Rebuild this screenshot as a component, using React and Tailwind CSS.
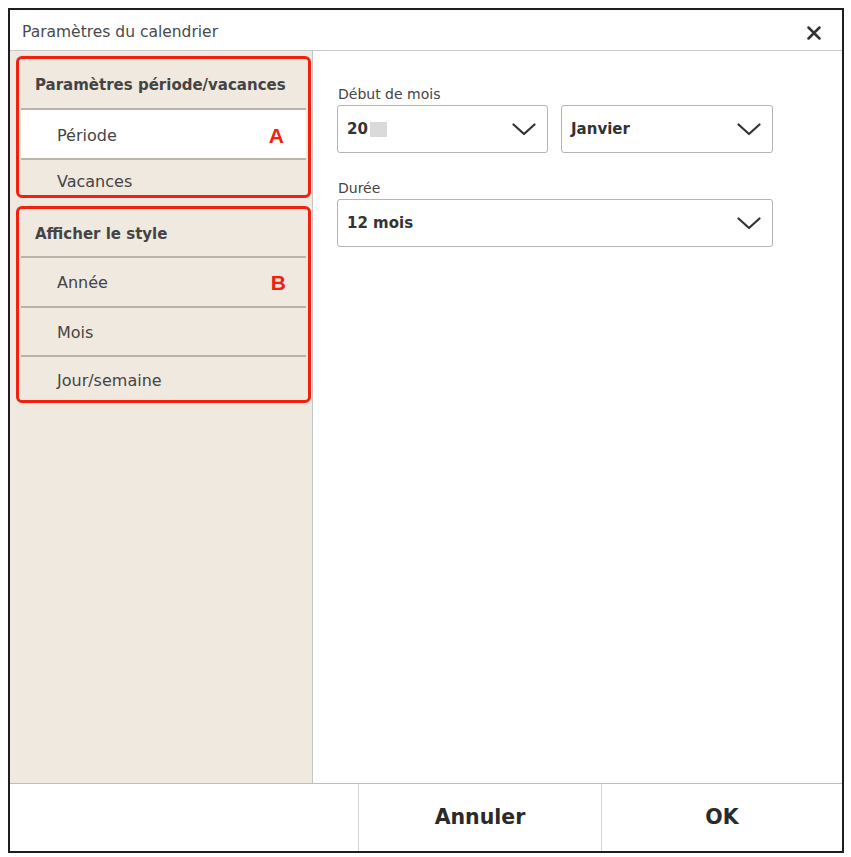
import React from "react";

const Chevron = () => (
  <svg width="24" height="13" viewBox="0 0 24 13" fill="none">
    <path d="M1.5 1.5 L12 11 L22.5 1.5" stroke="#333" strokeWidth="2.2" strokeLinecap="round" strokeLinejoin="round" />
  </svg>
);

const Sep = () => <div className="h-[2px] mx-[2px] bg-[#b9b3aa]" />;

function Select({ width, children }) {
  return (
    <div className={`${width} h-[48px] border-[1.5px] border-[#b4b4b4] rounded-[3px] bg-white flex items-center justify-between pl-[9px] pr-[11px]`}>
      <div className="flex items-center text-[15px] font-bold text-[#333]">{children}</div>
      <Chevron />
    </div>
  );
}

export default function App() {
  return (
    <div className="w-[851px] h-[857px] bg-white pt-[8px] pl-[8px] font-['DejaVu_Sans',sans-serif]">
      <div className="w-[836px] h-[845px] border-2 border-[#1e1e1e] flex flex-col bg-white">
        {/* title bar */}
        <div className="h-[41px] shrink-0 border-b border-[#c9c9c9] flex items-center justify-between pl-[12px] pr-[21px] pt-[6px]">
          <span className="text-[15.5px] text-[#4a4a4a]">Paramètres du calendrier</span>
          <svg width="14" height="14" viewBox="0 0 14 14">
            <path d="M1.5 1.5 L12.5 12.5 M12.5 1.5 L1.5 12.5" stroke="#333" strokeWidth="2.5" strokeLinecap="round" />
          </svg>
        </div>
        {/* body */}
        <div className="flex-1 flex min-h-0">
          <div className="w-[303px] shrink-0 bg-[#efe9df] border-r border-[#c4c4c4] pt-[5px] pl-[6px] pr-[1px] flex flex-col gap-[8px] text-[#444]">
            <div className="border-[3px] border-[#f2200f] rounded-[6px]">
              <div className="h-[49px] flex items-center pl-[16px] pt-[4px] text-[15px] font-bold">Paramètres période/vacances</div>
              <Sep />
              <div className="h-[48px] mx-[2px] bg-white flex items-center justify-between pl-[36px] pr-[22px] pt-[3px] text-[16px]">
                <span>Période</span>
                <span className="font-['Liberation_Sans',sans-serif] font-bold text-[21px] text-[#f2200f]">A</span>
              </div>
              <Sep />
              <div className="h-[35px] flex items-center pl-[38px] pt-[9px] text-[16px]">Vacances</div>
            </div>
            <div className="border-[3px] border-[#f2200f] rounded-[6px]">
              <div className="h-[47px] flex items-center pl-[16px] pt-[3px] text-[15px] font-bold">Afficher le style</div>
              <Sep />
              <div className="h-[48px] flex items-center justify-between pl-[38px] pr-[22px] pt-[2px] text-[16px]">
                <span>Année</span>
                <span className="font-['Liberation_Sans',sans-serif] font-bold text-[21px] text-[#f2200f]">B</span>
              </div>
              <Sep />
              <div className="h-[47px] flex items-center pl-[38px] pt-[2px] text-[16px]">Mois</div>
              <Sep />
              <div className="h-[43px] flex items-center pl-[38px] pt-[4px] text-[16px]">Jour/semaine</div>
            </div>
          </div>
          <div className="flex-1 pt-[35px] pl-[24px] flex flex-col">
            <div className="pl-[1px] text-[14px] leading-[17px] text-[#444]">Début de mois</div>
            <div className="mt-[2px] flex gap-[13px]">
              <Select width="w-[211px]">
                <span>20</span>
                <span className="ml-[2px] w-[17px] h-[15px] bg-[#dadada]" />
              </Select>
              <Select width="w-[212px]">Janvier</Select>
            </div>
            <div className="mt-[27px] pl-[1px] text-[14px] leading-[17px] text-[#444]">Durée</div>
            <div className="mt-[2px]">
              <Select width="w-[436px]">12 mois</Select>
            </div>
          </div>
        </div>
        {/* footer */}
        <div className="h-[68px] shrink-0 border-t border-[#bdbdbd] flex">
          <div className="w-[348px]" />
          <div className="w-[243px] border-l border-[#d4d4d4] flex items-center justify-center text-[20.5px] font-semibold text-[#2a2a2a]">Annuler</div>
          <div className="flex-1 border-l border-[#d4d4d4] flex items-center justify-center text-[20.5px] font-semibold text-[#2a2a2a]">OK</div>
        </div>
      </div>
    </div>
  );
}
